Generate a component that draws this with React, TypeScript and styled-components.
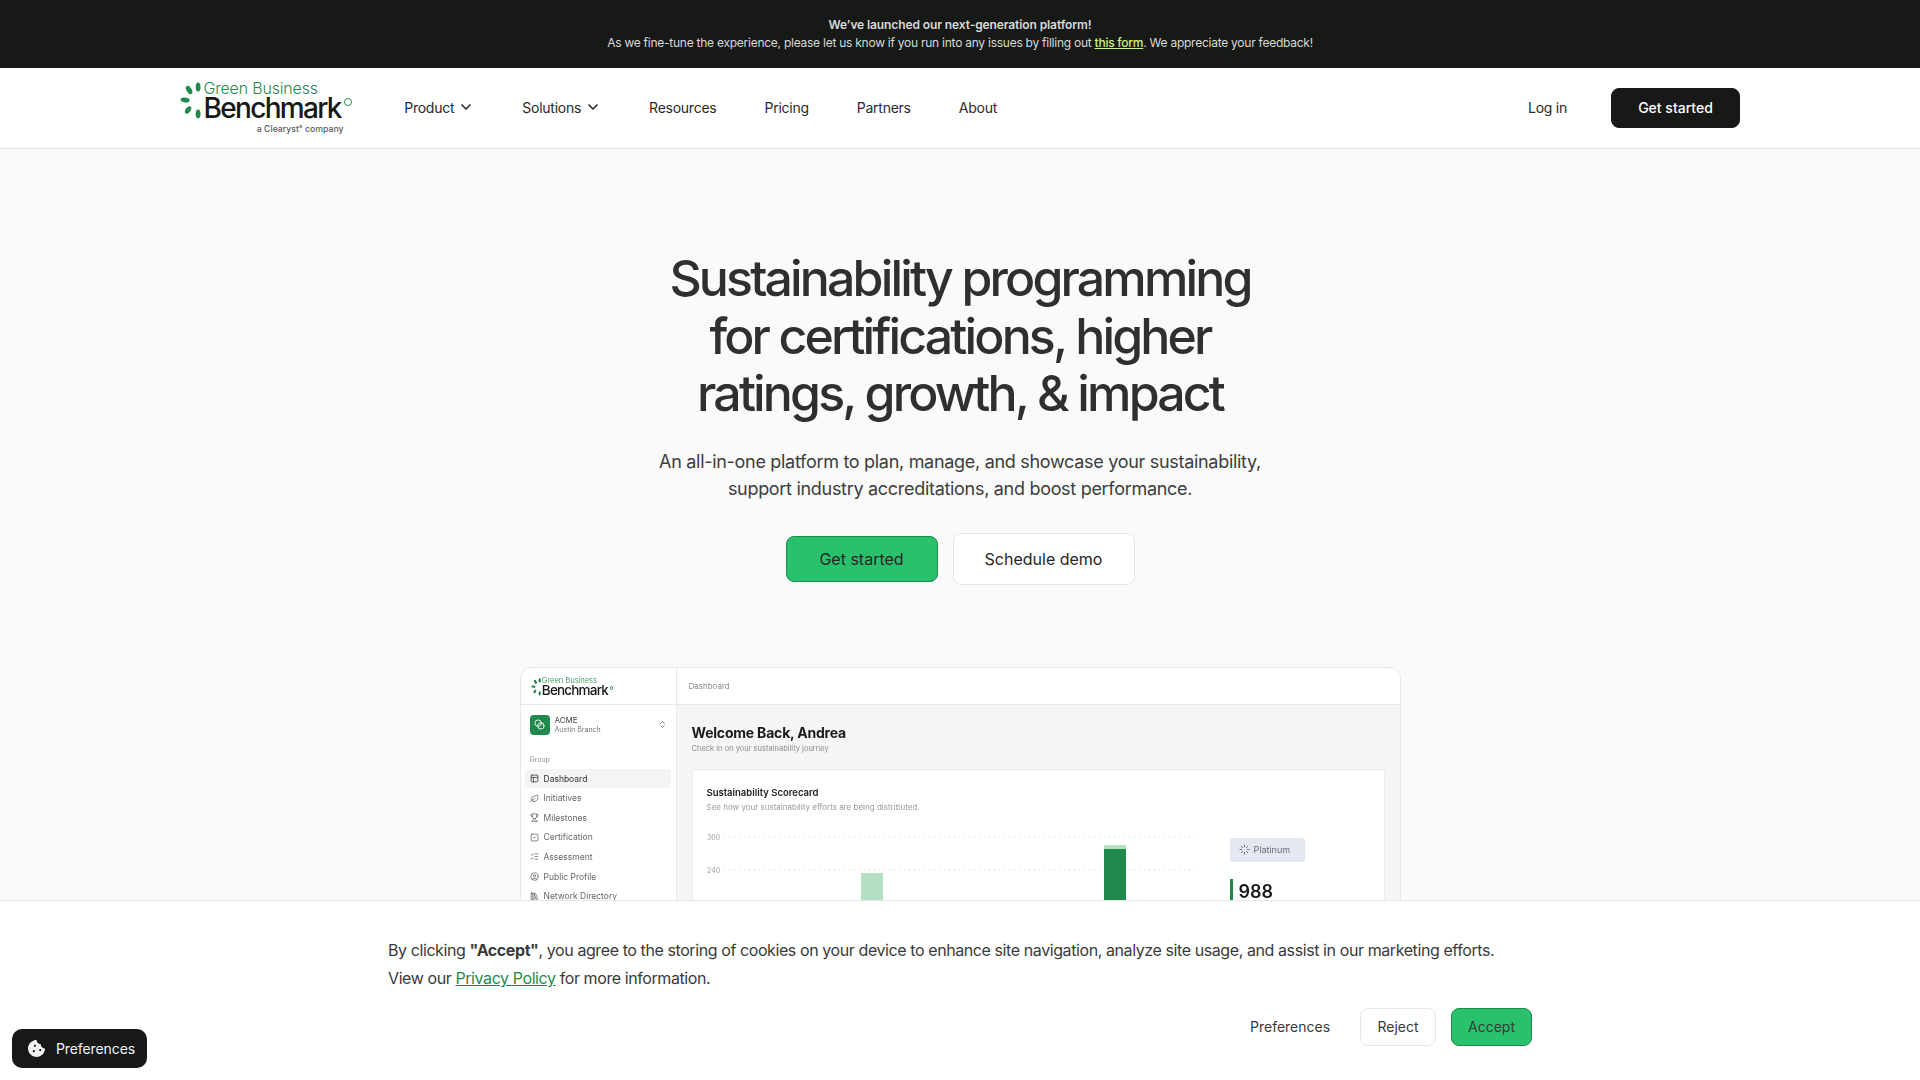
import React from 'react'
import styled, { createGlobalStyle } from 'styled-components'
import {
  ChevronDown,
  ChevronsUpDown,
  CircleUser,
  Leaf,
  LibraryBig,
  ListChecks,
  Loader,
  PanelsTopLeft,
  Blend,
  SquareCheck,
  Trophy
} from 'lucide-react'
import { FaCookieBite } from 'react-icons/fa'

const GlobalStyle = createGlobalStyle`
  html, body {
    margin: 0;
    padding: 0;
    height: 100%;
    overflow: hidden;
    background: #fafafa;
    font-family: Inter, "Liberation Sans", sans-serif;
    color: #2f2f2f;
  }
`

const Page = styled.div`
  height: 100vh;
  overflow: hidden;
`

const Banner = styled.div`
  height: 68px;
  box-sizing: border-box;
  padding-top: 16px;
  background: #171916;
  color: #d9dad6;
  text-align: center;
  font-size: 12px;
  line-height: 18px;
  letter-spacing: -0.25px;

  strong {
    font-weight: 600;
    letter-spacing: -0.1px;
  }

  a {
    color: #cdf27e;
    font-weight: 500;
    text-decoration: underline;
  }
`

const Header = styled.header`
  height: 81px;
  box-sizing: border-box;
  padding: 0 180px;
  display: flex;
  align-items: center;
  background: #fff;
  border-bottom: 1px solid #e5e5e5;
`

const LogoWrap = styled.div<{ $size: number }>`
  position: relative;
  width: 6.15em;
  height: 2.2em;
  font-size: ${(p) => p.$size}px;
  display: flex;
  flex-direction: column;
  align-items: flex-start;
  padding: 0.12em 0 0 0.84em;
  box-sizing: border-box;
  flex: none;
  color: #171916;
`

const LogoLeaves = styled.svg`
  position: absolute;
  left: 0;
  top: 0.1em;
  width: 0.9em;
  height: 1.5em;
`

const LogoGreen = styled.span`
  font-size: 0.57em;
  line-height: 1.05em;
  font-weight: 300;
  color: #1f8a4c;
  letter-spacing: -0.01em;
  white-space: nowrap;
`

const LogoName = styled.span`
  font-size: 1em;
  line-height: 0.84em;
  font-weight: 500;
  letter-spacing: -0.06em;
  white-space: nowrap;
`

const LogoRing = styled.span`
  position: absolute;
  left: 5.86em;
  top: 0.75em;
  width: 0.28em;
  height: 0.28em;
  box-sizing: border-box;
  border: 0.05em solid #1f8a4c;
  border-radius: 50%;
`

const LogoTag = styled.span`
  position: absolute;
  right: 1em;
  bottom: 0.6em;
  font-size: 0.31em;
  line-height: 1em;
  font-weight: 500;
  color: #5a5a5a;
  white-space: nowrap;
`

const NavList = styled.nav`
  margin-left: 52px;
  display: flex;
  align-items: center;
  gap: 48px;
`

const NavItem = styled.a`
  display: flex;
  align-items: center;
  gap: 4px;
  padding-bottom: 2px;
  font-size: 14px;
  letter-spacing: -0.25px;
  color: #2a2a2a;
`

const NavRight = styled.div`
  margin-left: auto;
  display: flex;
  align-items: center;
  gap: 44px;
`

const Button = styled.button<{ $variant: 'green' | 'white' | 'dark' | 'plain' }>`
  box-sizing: border-box;
  font-family: inherit;
  border-radius: 8px;
  font-weight: 400;
  padding: 0;
  color: ${(p) => (p.$variant === 'dark' ? '#fff' : '#262626')};
  background: ${(p) =>
    p.$variant === 'green'
      ? '#2ac16d'
      : p.$variant === 'white'
        ? '#fff'
        : p.$variant === 'dark'
          ? '#171916'
          : 'transparent'};
  border: 1px solid
    ${(p) =>
      p.$variant === 'green'
        ? '#1f8a4c'
        : p.$variant === 'white'
          ? '#e7e7e7'
          : p.$variant === 'dark'
            ? '#171916'
            : 'transparent'};
`

const NavButton = styled(Button)`
  width: 129px;
  height: 40px;
  padding-bottom: 2px;
  font-size: 14px;
  font-weight: 500;
`

const Hero = styled.section`
  padding-top: 101px;
  display: flex;
  flex-direction: column;
  align-items: center;
  text-align: center;
`

const Title = styled.h1`
  margin: 0;
  width: 640px;
  font-size: 50px;
  line-height: 57.6px;
  font-weight: 500;
  letter-spacing: -2.85px;
  color: #2f2f2f;
`

const Lead = styled.p`
  margin: 25px 0 0;
  font-size: 18px;
  line-height: 27px;
  color: #3d3d3d;
  letter-spacing: -0.3px;
`

const HeroActions = styled.div`
  margin-top: 31px;
  display: flex;
  align-items: center;
  gap: 15px;
`

const HeroGreen = styled(Button)`
  width: 152px;
  height: 46px;
  font-size: 16px;
`

const HeroWhite = styled(Button)`
  width: 182px;
  height: 52px;
  font-size: 16px;
`

const Mock = styled.div`
  margin-top: 82px;
  width: 881px;
  height: 400px;
  display: grid;
  grid-template-columns: 156px 1fr;
  grid-template-rows: 37px 1fr;
  background: #fff;
  border: 1px solid #e8e8e8;
  border-radius: 12px 12px 0 0;
  overflow: hidden;
  text-align: left;
  box-sizing: border-box;
  filter: blur(0.35px);
`

const MockLogoCell = styled.div`
  padding: 8px 0 0 10px;
  border-right: 1px solid #e8e8e8;
  border-bottom: 1px solid #e8e8e8;
`

const MockTop = styled.div`
  display: flex;
  align-items: center;
  padding-left: 12px;
  border-bottom: 1px solid #e8e8e8;
  font-size: 8px;
  color: #8a8a8a;
`

const Sidebar = styled.aside`
  border-right: 1px solid #e8e8e8;
  padding: 10px 5px 10px 4px;
`

const OrgRow = styled.div`
  display: flex;
  align-items: center;
  padding-left: 5px;
  gap: 5px;
  color: #555;
`

const OrgIcon = styled.div`
  width: 20px;
  height: 20px;
  border-radius: 4px;
  background: #1f8a4c;
  color: #fff;
  display: flex;
  align-items: center;
  justify-content: center;
`

const OrgText = styled.div`
  flex: 1;
  font-size: 8px;
  line-height: 10px;
  margin-top: -1px;
  color: #444;

  small {
    display: block;
    font-size: 7px;
    line-height: 9px;
    color: #777;
  }
`

const GroupLabel = styled.div`
  margin: 20px 0 4px 5px;
  font-size: 7px;
  line-height: 10px;
  color: #8a8a8a;
`

const SideItem = styled.div<{ $active?: boolean }>`
  height: 19.6px;
  display: flex;
  align-items: center;
  gap: 5px;
  padding-left: 5px;
  border-radius: 3px;
  font-size: 8.5px;
  color: ${(p) => (p.$active ? '#333' : '#666')};
  background: ${(p) => (p.$active ? '#f4f4f4' : 'transparent')};
`

const MockMain = styled.main`
  background: #f5f5f5;
  padding: 19px 15px 0;
`

const Welcome = styled.h2`
  margin: 0;
  font-size: 14px;
  line-height: 18px;
  font-weight: 700;
  color: #1b1b1b;
  letter-spacing: -0.2px;
`

const WelcomeSub = styled.p`
  margin: 2px 0 0;
  font-size: 7.5px;
  line-height: 10px;
  color: #8d8d8d;
`

const ScoreCard = styled.div`
  margin-top: 15px;
  height: 200px;
  box-sizing: border-box;
  padding: 17px 14px;
  background: #fff;
  border: 1px solid #ebebeb;
  border-radius: 3px;
`

const ScoreTitle = styled.div`
  font-size: 9.5px;
  line-height: 12px;
  font-weight: 600;
  color: #222;
`

const ScoreSub = styled.div`
  margin-top: 3px;
  font-size: 8px;
  line-height: 10px;
  color: #9a9a9a;
`

const ScoreBody = styled.div`
  margin-top: 21px;
  display: flex;
  gap: 32px;
`

const Chart = styled.svg`
  width: 491px;
  height: 120px;
  flex: none;
`

const ScoreSide = styled.div`
  padding-top: 5px;
`

const Chip = styled.div`
  width: 75px;
  height: 24px;
  display: flex;
  align-items: center;
  gap: 4px;
  padding-left: 9px;
  box-sizing: border-box;
  border-radius: 2px;
  background: #e4e8f0;
  font-size: 9px;
  color: #666c75;
`

const ScoreValue = styled.div`
  margin-top: 17px;
  padding-left: 6px;
  border-left: 3px solid #1f8a4c;
  font-size: 18px;
  line-height: 26px;
  font-weight: 600;
  color: #1b1b1b;
`

const Cookie = styled.div`
  position: fixed;
  left: 0;
  right: 0;
  bottom: 0;
  height: 180px;
  box-sizing: border-box;
  padding: 35px 388px 0;
  background: #fff;
  border-top: 1px solid #e6e6e6;
`

const CookieText = styled.p`
  margin: 0;
  font-size: 16px;
  line-height: 28px;
  color: #3a3a3a;
  letter-spacing: -0.41px;
  white-space: nowrap;

  strong {
    font-weight: 700;
  }

  a {
    color: #1f8a4c;
    text-decoration: underline;
  }
`

const CookieActions = styled.div`
  margin-top: 16px;
  display: flex;
  justify-content: flex-end;
  align-items: center;
`

const CookieButton = styled(Button)<{ $w: number; $gap: number }>`
  width: ${(p) => p.$w}px;
  height: 38px;
  margin-left: ${(p) => p.$gap}px;
  padding-bottom: 2px;
  font-size: 14px;
  color: #3a3a3a;
`

const PrefsPill = styled.div`
  position: fixed;
  left: 12px;
  top: 1029px;
  width: 135px;
  height: 39px;
  box-sizing: border-box;
  padding-left: 16px;
  display: flex;
  align-items: center;
  gap: 11px;
  border-radius: 10px;
  background: #171916;
  color: #f3f3f3;
  font-size: 14px;
  letter-spacing: -0.1px;
`

const Logo: React.FC<{ size: number; tagged?: boolean }> = ({ size, tagged }) => (
  <LogoWrap $size={size}>
    <LogoLeaves viewBox="0 0 25 42">
      <g fill="#1f8a4c">
        <ellipse cx="9" cy="10" rx="2.6" ry="4.6" transform="rotate(-30 9 10)" />
        <ellipse cx="18" cy="7" rx="2.4" ry="4.6" />
        <ellipse cx="5" cy="20" rx="4.6" ry="2.4" transform="rotate(8 5 20)" />
        <ellipse cx="8" cy="30" rx="2.4" ry="4.2" transform="rotate(35 8 30)" />
        <ellipse cx="18" cy="34" rx="2.4" ry="4.4" />
      </g>
    </LogoLeaves>
    <LogoGreen>Green Business</LogoGreen>
    <LogoName>Benchmark</LogoName>
    <LogoRing />
    {tagged && <LogoTag>a Clearyst° company</LogoTag>}
  </LogoWrap>
)

const navLinks = [
  { label: 'Product', caret: true },
  { label: 'Solutions', caret: true },
  { label: 'Resources' },
  { label: 'Pricing' },
  { label: 'Partners' },
  { label: 'About' }
]

const sideLinks = [
  { label: 'Dashboard', Icon: PanelsTopLeft, active: true },
  { label: 'Initiatives', Icon: Leaf },
  { label: 'Milestones', Icon: Trophy },
  { label: 'Certification', Icon: SquareCheck },
  { label: 'Assessment', Icon: ListChecks },
  { label: 'Public Profile', Icon: CircleUser },
  { label: 'Network Directory', Icon: LibraryBig }
]

const App: React.FC = () => {
  return (
    <Page>
      <GlobalStyle />
      <Banner>
        <strong>We’ve launched our next-generation platform!</strong>
        <br />
        As we fine-tune the experience, please let us know if you run into any issues by filling out{' '}
        <a href="#form">this form</a>. We appreciate your feedback!
      </Banner>
      <Header>
        <Logo size={28} tagged />
        <NavList>
          {navLinks.map((l) => (
            <NavItem key={l.label}>
              {l.label}
              {l.caret && <ChevronDown size={16} strokeWidth={2.5} />}
            </NavItem>
          ))}
        </NavList>
        <NavRight>
          <NavItem>Log in</NavItem>
          <NavButton $variant="dark">Get started</NavButton>
        </NavRight>
      </Header>
      <Hero>
        <Title>
          Sustainability programming
          <br />
          for certifications, higher
          <br />
          ratings, growth, &amp; impact
        </Title>
        <Lead>
          An all-in-one platform to plan, manage, and showcase your sustainability,
          <br />
          support industry accreditations, and boost performance.
        </Lead>
        <HeroActions>
          <HeroGreen $variant="green">Get started</HeroGreen>
          <HeroWhite $variant="white">Schedule demo</HeroWhite>
        </HeroActions>
        <Mock>
          <MockLogoCell>
            <Logo size={13.5} />
          </MockLogoCell>
          <MockTop>Dashboard</MockTop>
          <Sidebar>
            <OrgRow>
              <OrgIcon>
                <Blend size={11} />
              </OrgIcon>
              <OrgText>
                ACME
                <small>Austin Branch</small>
              </OrgText>
              <ChevronsUpDown size={9} style={{ marginRight: 4 }} />
            </OrgRow>
            <GroupLabel>Group</GroupLabel>
            {sideLinks.map(({ label, Icon, active }) => (
              <SideItem key={label} $active={active}>
                <Icon size={9} />
                {label}
              </SideItem>
            ))}
          </Sidebar>
          <MockMain>
            <Welcome>Welcome Back, Andrea</Welcome>
            <WelcomeSub>Check in on your sustainability journey</WelcomeSub>
            <ScoreCard>
              <ScoreTitle>Sustainability Scorecard</ScoreTitle>
              <ScoreSub>See how your sustainability efforts are being distributed.</ScoreSub>
              <ScoreBody>
                <Chart viewBox="0 0 491 120">
                  {[
                    { y: 4, t: '300' },
                    { y: 37, t: '240' },
                    { y: 70, t: '180' }
                  ].map((g) => (
                    <g key={g.t}>
                      <text x="0" y={g.y + 3} fontSize="7" fill="#a0a0a0">
                        {g.t}
                      </text>
                      <line x1="17" x2="491" y1={g.y} y2={g.y} stroke="#d4d4d4" strokeDasharray="1 4" />
                    </g>
                  ))}
                  <rect x="154" y="40" width="22" height="80" fill="#b3e0c3" />
                  <rect x="397" y="12" width="22" height="5" fill="#b3e0c3" />
                  <rect x="397" y="16" width="22" height="104" fill="#1f8a4c" />
                </Chart>
                <ScoreSide>
                  <Chip>
                    <Loader size={11} />
                    Platinum
                  </Chip>
                  <ScoreValue>988</ScoreValue>
                </ScoreSide>
              </ScoreBody>
            </ScoreCard>
          </MockMain>
        </Mock>
      </Hero>
      <Cookie>
        <CookieText>
          By clicking <strong>"Accept"</strong>, you agree to the storing of cookies on your device to enhance site navigation, analyze site usage, and assist in our marketing efforts.
          <br />
          View our <a href="#privacy">Privacy Policy</a> for more information.
        </CookieText>
        <CookieActions>
          <CookieButton $variant="plain" $w={80} $gap={0}>
            Preferences
          </CookieButton>
          <CookieButton $variant="white" $w={76} $gap={31}>
            Reject
          </CookieButton>
          <CookieButton $variant="green" $w={81} $gap={15}>
            Accept
          </CookieButton>
        </CookieActions>
      </Cookie>
      <PrefsPill>
        <FaCookieBite size={17} />
        Preferences
      </PrefsPill>
    </Page>
  )
}

export default App
